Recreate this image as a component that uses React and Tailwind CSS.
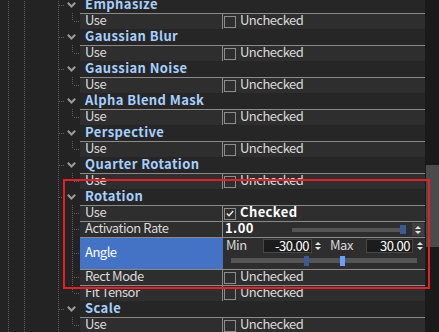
import React from "react";

const DotV = ({ className = "" }) => (
  <div className={"w-px bg-[repeating-linear-gradient(to_bottom,#5e5e5e_0px,#5e5e5e_1px,transparent_1px,transparent_2px)] " + className} />
);

const Chevron = () => (
  <svg width="9" height="6" viewBox="0 0 9 6" className="block">
    <polyline points="0.8,0.8 4.5,4.5 8.2,0.8" fill="none" stroke="#9c9c9c" strokeWidth="2" />
  </svg>
);

const Spin = () => (
  <svg width="6" height="10" viewBox="0 0 6 10" className="block">
    <polygon points="0,4 3,1 6,4" fill="#e6e6e6" />
    <polygon points="0,6 3,9 6,6" fill="#e6e6e6" />
  </svg>
);

function Gutter({ kind }) {
  return (
    <div className="flex w-[80px] shrink-0 self-stretch">
      <div className="w-[8px]" />
      <DotV />
      <div className="w-[15px]" />
      <DotV />
      <div className="w-[33px]" />
      <DotV />
      {kind === "header" ? (
        <div className="flex flex-1 items-center">
          <div className="h-px w-[5px] bg-[repeating-linear-gradient(to_right,#5e5e5e_0px,#5e5e5e_1px,transparent_1px,transparent_2px)]" />
          <div className="w-[3px]" />
          <Chevron />
        </div>
      ) : (
        <div className="flex flex-1">
          <div className="w-[13px]" />
          <div className="flex w-px flex-col">
            <DotV className="h-1/2" />
            {kind === "child" && <DotV className="h-1/2" />}
          </div>
          <div className="flex items-center">
            <div className="h-px w-[6px] bg-[repeating-linear-gradient(to_right,transparent_0px,transparent_1px,#5e5e5e_1px,#5e5e5e_2px)]" />
          </div>
        </div>
      )}
    </div>
  );
}

function CheckValue({ checked }) {
  return (
    <div className="flex h-full items-center pl-px">
      <div className="flex h-[12px] w-[12px] shrink-0 items-center justify-center border border-[#8c8c8c]">
        {checked && (
          <svg width="8" height="7" viewBox="0 0 8 7" className="block">
            <polyline points="0.8,3.5 3,5.7 7.2,1" fill="none" stroke="#f0f0f0" strokeWidth="1.4" />
          </svg>
        )}
      </div>
      {checked ? (
        <span className="mb-[4px] ml-[4px] text-[13px] font-bold leading-[13px] tracking-[0.4px] text-white">Checked</span>
      ) : (
        <span className="mb-[4px] ml-[4px] text-[13px] leading-[13px] tracking-[-0.5px] text-[#dadada]">Unchecked</span>
      )}
    </div>
  );
}

function SliderValue() {
  return (
    <div className="flex h-full items-center">
      <span className="mb-[4px] ml-[2px] w-[67px] text-[13px] font-bold leading-[13px] tracking-[0.4px] text-white">1.00</span>
      <div className="relative h-[4px] w-[109px] bg-[#555555]">
        <div className="absolute left-[108px] top-[-3px] h-[9px] w-[6px] bg-[#3d5a94]" />
      </div>
      <div className="ml-[11px] flex h-[13px] w-[12px] items-center justify-center bg-[#3f3f3f]">
        <Spin />
      </div>
    </div>
  );
}

function RangeValue() {
  return (
    <div className="flex h-full flex-col">
      <div className="mt-px flex h-[14px] items-center text-[13px] leading-[13px] tracking-[-0.5px] text-[#dadada]">
        <span className="mb-[3px] ml-[3px] w-[37px]">Min</span>
        <div className="flex h-[14px] w-[49px] items-center justify-end border border-[#474747] bg-[#1c1c1c] pb-[2px] pr-[2px] text-white">-30.00</div>
        <div className="w-[18px] pl-[3px]"><Spin /></div>
        <span className="mb-[3px] w-[36px]">Max</span>
        <div className="flex h-[14px] w-[47px] items-center justify-end border border-[#474747] bg-[#1c1c1c] pb-[2px] pr-[2px] text-white">30.00</div>
        <div className="pl-[4px]"><Spin /></div>
      </div>
      <div className="relative ml-[8px] mt-[5px] h-[5px] w-[186px] bg-[#555555]">
        <div className="absolute left-[73px] top-[-2px] h-[10px] w-[5px] bg-[#3d5a94]" />
        <div className="absolute left-[109px] top-[-2px] h-[10px] w-[5px] bg-[#6b9fff]" />
      </div>
    </div>
  );
}

function Header({ name }) {
  return (
    <div className="flex h-4">
      <Gutter kind="header" />
      <div className="flex flex-1 items-center bg-[#262626] pb-[3px] pl-[5px] text-[13px] font-bold leading-[13px] tracking-[0.4px] text-[#a6cffe]">
        {name}
      </div>
    </div>
  );
}

function Prop({ name, kind, tall, selected, children }) {
  return (
    <div className={tall ? "flex h-8" : "flex h-4"}>
      <Gutter kind={kind} />
      <div className="flex flex-1 border-t border-[#8a8a8a] bg-[#2e2e2e]">
        <div
          className={
            selected
              ? "flex w-[142px] items-center bg-[#4472c4] pb-[4px] pl-[5px] text-[13px] leading-[13px] tracking-[-0.5px] text-white"
              : "flex w-[142px] items-center pb-[4px] pl-[5px] text-[13px] leading-[13px] tracking-[-0.5px] text-[#dadada]"
          }
        >
          {name}
        </div>
        <div className={selected ? "w-px bg-[#4472c4]" : "w-px bg-[#8a8a8a]"} />
        <div className="flex-1">{children}</div>
      </div>
    </div>
  );
}

const simple = ["Emphasize", "Gaussian Blur", "Gaussian Noise", "Alpha Blend Mask", "Perspective", "Quarter Rotation"];

export default function App() {
  return (
    <div className="relative flex h-[332px] w-[439px] overflow-hidden bg-[#232323] font-['Noto_Sans_CJK_KR','DejaVu_Sans',sans-serif]">
      <div className="flex-1">
        <div className="mt-[-3px] flex flex-col">
          {simple.map((s) => (
            <React.Fragment key={s}>
              <Header name={s} />
              <Prop name="Use" kind="last">
                <CheckValue checked={false} />
              </Prop>
            </React.Fragment>
          ))}
          <Header name="Rotation" />
          <Prop name="Use" kind="child">
            <CheckValue checked={true} />
          </Prop>
          <Prop name="Activation Rate" kind="child">
            <SliderValue />
          </Prop>
          <Prop name="Angle" kind="child" tall selected>
            <RangeValue />
          </Prop>
          <Prop name="Rect Mode" kind="child">
            <CheckValue checked={false} />
          </Prop>
          <Prop name="Fit Tensor" kind="last">
            <CheckValue checked={false} />
          </Prop>
          <Header name="Scale" />
          <Prop name="Use" kind="last">
            <CheckValue checked={false} />
          </Prop>
        </div>
      </div>
      <div className="flex w-[14px] shrink-0 flex-col bg-[#1a1a1a] pl-px">
        <div className="h-[165px]" />
        <div className="h-[82px] bg-[#4b4b4b]" />
      </div>
      <div className="absolute left-[63px] top-[179px] h-[110px] w-[367px] border-2 border-[#e3202a]" />
    </div>
  );
}
